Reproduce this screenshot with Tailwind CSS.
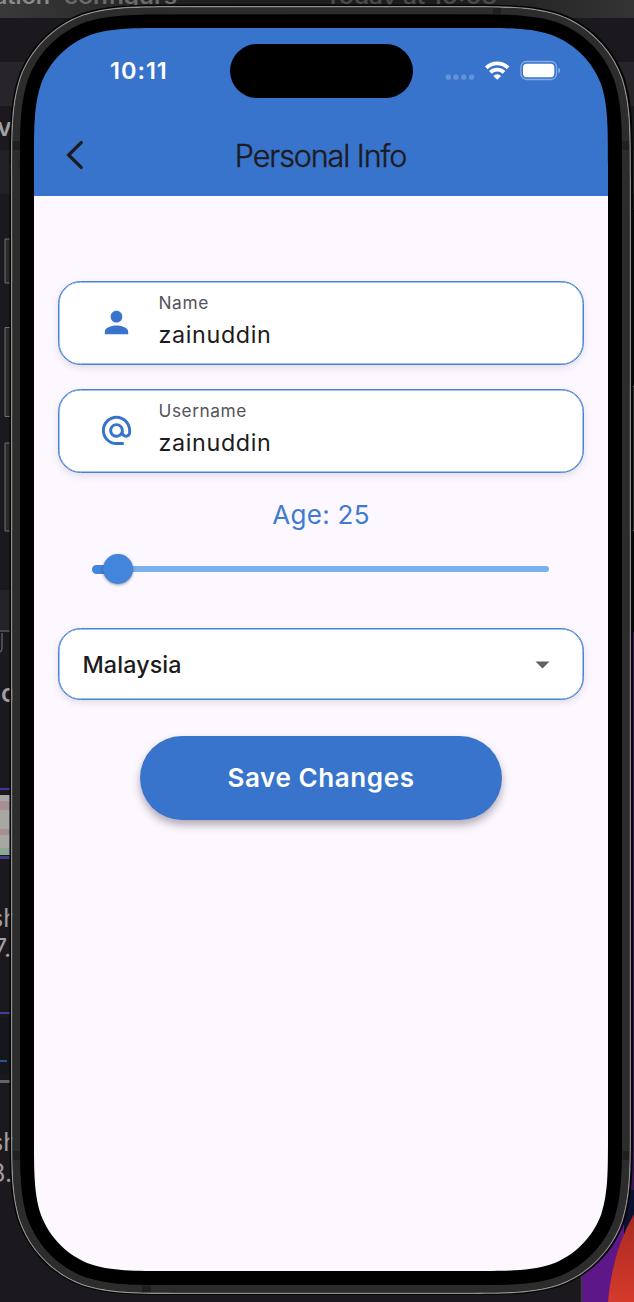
<!DOCTYPE html>
<html lang="en">
<head>
<meta charset="utf-8">
<title>Personal Info</title>
<script src="https://cdn.jsdelivr.net/npm/@tailwindcss/browser@4"></script>
</head>
<body class="relative h-[1302px] w-[634px] overflow-hidden bg-[#1b191e] font-['Inter','Liberation_Sans',sans-serif]">

<!-- desktop behind the device -->
<svg class="absolute inset-0" width="634" height="1302" viewBox="0 0 634 1302">
  <defs>
    <linearGradient id="top" x1="0" x2="1"><stop offset="0" stop-color="#3a3a3a"/><stop offset=".3" stop-color="#1f1f1f"/><stop offset=".7" stop-color="#1c1c1c"/><stop offset="1" stop-color="#343434"/></linearGradient>
    <linearGradient id="red" x1="0" y1="0" x2="0" y2="1"><stop offset="0" stop-color="#a82a20"/><stop offset="1" stop-color="#d53a2b"/></linearGradient>
  </defs>
  <rect width="634" height="18" fill="url(#top)"/>
  <rect y="62" width="634" height="44" fill="#272529"/>
  <rect y="150" width="634" height="44" fill="#232125"/>
  <rect y="590" width="12" height="40" fill="#252327"/>
  <rect y="630" width="12" height="2" fill="#49474b"/>
  <path d="M2 633v14q0 4-2 5" fill="none" stroke="#5b595d" stroke-width="1.5"/>
  <rect y="788" width="10" height="2" fill="#3a3a9a"/>
  <rect y="795" width="10" height="60" fill="#a9a6a6"/>
  <rect y="801" width="10" height="9" fill="#a79092"/>
  <rect y="829" width="10" height="6" fill="#a79092"/>
  <rect y="848" width="10" height="7" fill="#8ba597"/>
  <rect y="856" width="10" height="3" fill="#3c3c86"/>
  <rect y="1012" width="10" height="2" fill="#3f3f9d"/>
  <rect y="1017" width="10" height="57" fill="#15171c"/>
  <rect y="1060" width="7" height="2" fill="#2a5296"/>
  <rect y="1080" width="10" height="3" fill="#66656c"/>
  <path d="M582 1180h52v122h-52z" fill="#5d1788"/>
  <path d="M624 1190h10v60h-10z" fill="#0c1030"/>
  <path d="M608 1302q4-50 26-88v88z" fill="url(#red)"/>
  <path d="M631 632h3v558h-3z" fill="#3c1757"/>
  <path d="M581.500 1270v32" stroke="#3c3b3f" stroke-width="1.500"/>
  <rect x="629" y="387" width="5" height="143" fill="#2b2b2b"/>
  <rect x="629" y="210" width="5" height="176" fill="#050505"/>
  <rect x="629" y="531" width="5" height="101" fill="#050505"/>
  <path d="M630 386.500h4M630 530.500h4" stroke="#777"/>
  <g font-size="20" font-weight="600" fill="#8a8a8a">
    <text x="-6" y="4" textLength="56" lengthAdjust="spacingAndGlyphs">ation</text>
    <text x="64" y="4" textLength="113" lengthAdjust="spacingAndGlyphs" fill="#6a6a6a">configurs</text>
    <text x="325" y="4" textLength="172" lengthAdjust="spacingAndGlyphs" fill="#4a4a4a">Today at 10:08</text>
  </g>
  <g font-size="25" fill="#a09fa2">
    <text x="-3" y="136" font-weight="600">v</text>
    <text x="1" y="702" font-weight="600">o</text>
    <text x="-10" y="927">sh</text>
    <text x="-7" y="957">7.</text>
    <text x="-10" y="1151">sh</text>
    <text x="-10" y="1182">8.</text>
  </g>
</svg>

<!-- app screen -->
<main class="relative ml-[34px] mt-[28px] flex h-[1243px] w-[574px] flex-col overflow-hidden rounded-[70px] bg-[#fdf8ff]">
  <header class="flex h-[167.500px] flex-col bg-[#3874cc]">
    <div class="flex h-[86px] items-center">
      <div class="w-[195.500px] pl-[76px] text-[23.500px] font-semibold leading-none tracking-[1px] text-white">10:11</div>
      <div class="h-[54px] w-[183px] rounded-full bg-black"></div>
      <svg class="mb-[3px] ml-[31px]" width="118" height="24" viewBox="444 58 118 24">
        <g fill="#fff" fill-opacity=".22"><rect x="445.700" y="74.500" width="5.200" height="5.200" rx="1.800"/><rect x="453.400" y="74.500" width="5.200" height="5.200" rx="1.800"/><rect x="461.200" y="74.500" width="5.200" height="5.200" rx="1.800"/><rect x="469" y="74.500" width="5.200" height="5.200" rx="1.800"/></g>
        <g fill="none" stroke="#fff" stroke-width="3.700"><path d="M486.300 67.900a15.600 15.600 0 0 1 21.800 0"/><path d="M490.400 72.400a9.700 9.700 0 0 1 13.600 0"/></g>
        <path d="M497.200 79.700l-3.900-3.800a5.600 5.600 0 0 1 7.800 0z" fill="#fff"/>
        <rect x="520.900" y="61.500" width="35.600" height="18" rx="5.500" fill="none" stroke="#fff" stroke-opacity=".4" stroke-width="1.300"/>
        <rect x="523" y="63.700" width="31.300" height="13.600" rx="3.700" fill="#fff"/>
        <path d="M558.300 67.800q1.900.8 1.900 2.700t-1.900 2.700z" fill="#fff" fill-opacity=".45"/>
      </svg>
    </div>
    <div class="relative flex flex-1 items-center justify-center">
      <svg class="absolute left-[30px] top-[24px]" width="24" height="34" viewBox="64 138 24 34" fill="none" stroke="#1d1b20" stroke-width="3.300" stroke-linecap="round" stroke-linejoin="miter"><path d="M81.200 142.600L68.600 155l12.600 12.400"/></svg>
      <h1 class="pr-px pt-[2px] text-[30.500px] font-light leading-none tracking-[-1.100px] text-[#1d1b20] [-webkit-text-stroke:0.400px_#1d1b20]">Personal Info</h1>
    </div>
  </header>

  <form class="flex flex-col px-[24px] pt-[85.500px]">
    <label class="flex h-[84px] items-center rounded-[22.500px] border border-[#4684d6] bg-white shadow-[inset_0_0_0_0.500px_#4684d6,0_3px_7px_rgba(60,40,70,0.13)]">
      <svg class="-mt-px ml-[40px]" width="35" height="35" viewBox="0 0 24 24" fill="#3874cc"><path d="M12 12c2.210 0 4-1.790 4-4s-1.790-4-4-4-4 1.790-4 4 1.790 4 4 4zm0 2c-2.670 0-8 1.340-8 4v2h16v-2c0-2.660-5.330-4-8-4z"/></svg>
      <span class="-mt-[4px] ml-[24.500px] flex flex-col">
        <span class="text-[17.300px] leading-[22px] tracking-[0.600px] text-[#55525a]">Name</span>
        <span class="mt-[5px] text-[23.300px] leading-[32px] tracking-[0.650px] text-[#1d1b20]">zainuddin</span>
      </span>
    </label>
    <label class="mt-[24px] flex h-[84px] items-center rounded-[22.500px] border border-[#4684d6] bg-white shadow-[inset_0_0_0_0.500px_#4684d6,0_3px_7px_rgba(60,40,70,0.13)]">
      <svg class="-mt-px ml-[40px]" width="35" height="35" viewBox="0 0 24 24" fill="#3874cc"><path d="M12 1.950c-5.520 0-10 4.480-10 10s4.480 10 10 10h5v-2h-5c-4.340 0-8-3.660-8-8s3.660-8 8-8 8 3.660 8 8v1.430c0 .79-.71 1.570-1.500 1.570s-1.500-.78-1.500-1.570v-1.430c0-2.760-2.240-5-5-5s-5 2.240-5 5 2.240 5 5 5c1.380 0 2.640-.56 3.540-1.470.65.890 1.770 1.470 2.960 1.470 1.970 0 3.500-1.600 3.500-3.570v-1.430c0-5.520-4.480-10-10-10zm0 13c-1.660 0-3-1.340-3-3s1.340-3 3-3 3 1.340 3 3-1.340 3-3 3z"/></svg>
      <span class="-mt-[4px] ml-[24.500px] flex flex-col">
        <span class="text-[17.300px] leading-[22px] tracking-[0.550px] text-[#55525a]">Username</span>
        <span class="mt-[5px] text-[23.300px] leading-[32px] tracking-[0.650px] text-[#1d1b20]">zainuddin</span>
      </span>
    </label>
    <p class="mt-[26px] text-center text-[26px] leading-[32px] tracking-[0.300px] text-[#3f7bd0]">Age: 25</p>
    <div class="mt-[23px] flex h-[30px] items-center pl-[34px]">
      <div class="h-[9px] w-[15px] rounded-l-full bg-[#4285dc]"></div>
      <div class="z-10 -ml-[4px] size-[30px] rounded-full bg-[#4285dc] shadow-[0_1px_3px_rgba(0,0,0,0.4)]"></div>
      <div class="-ml-[2px] h-[6px] w-[418px] rounded-r-full bg-[#78b1ee]"></div>
    </div>
    <div class="mt-[44px] flex h-[72px] items-center justify-between rounded-[22.500px] border border-[#4684d6] bg-white pl-[23.500px] pr-[33px] shadow-[inset_0_0_0_0.500px_#4684d6,0_3px_7px_rgba(60,40,70,0.13)]">
      <span class="pt-[2px] text-[23.300px] font-medium tracking-[0.100px] text-[#1d1b20]">Malaysia</span>
      <svg class="mt-px" width="15" height="8" viewBox="0 0 14 8" fill="#616161"><path d="M0 .5h14L7 7.500z"/></svg>
    </div>
    <button type="button" class="mt-[36px] h-[84px] w-[362px] self-center rounded-full bg-[#3874cc] pb-[2px] text-[26px] font-semibold tracking-[0.600px] text-white shadow-[0_5px_9px_rgba(40,25,50,0.35)]">Save Changes</button>
  </form>
</main>

<!-- device bezel, drawn over the screen edges -->
<svg class="pointer-events-none absolute inset-0" width="634" height="1302" viewBox="0 0 634 1302">
  <g fill="#2b2b2b" stroke="#707070">
    <path d="M12 239H5v44h7z"/><path d="M12 327.500H5v89h7z"/><path d="M12 443H5v88h7z"/>
  </g>
  <path data-ring="9.500,4.500,623.500,1290.500,115" data-hole="12,7,618,1285,112" fill="#050505" fill-rule="evenodd"/>
  <path data-ring="11,6,620,1288,114" data-hole="12.500,7.500,617,1285,112" fill="#929292" fill-rule="evenodd"/>
  <path data-ring="12.400,7.400,617.200,1285.200,112" data-hole="20,14,602,1271,104" fill="#2c2c2c" fill-rule="evenodd"/>
  <g fill="#1f1f1f"><path d="M493 8h8v6.500h-8zM142 1285.500h9v6.500h-9zM13 141h7v9h-7zM13 1151h7v9h-7zM622.500 141h6.500v9h-6.500zM622.500 1151h6.500v9h-6.500z"/></g>
  <path data-ring="20,14.500,602,1270.500,104" data-hole="34,28,574,1243,90" fill="#000" fill-rule="evenodd"/>
</svg>
<script>
// Rounded rectangle with continuous-curvature corners.
function smooth(s) {
  const [x, y, w, h, r] = s.split(',').map(Number);
  const C = [[1.5287,0],[1.0885,0],[.8684,0],[.6315,.0749],[.3728,.1691],[.1691,.3728],[.0749,.6315],[0,.8684],[0,1.0885],[0,1.5287]];
  const R = C.slice().reverse();
  const tl = R.map(([a,b]) => [x+a*r, y+b*r]);
  const tr = C.map(([a,b]) => [x+w-a*r, y+b*r]);
  const br = R.map(([a,b]) => [x+w-a*r, y+h-b*r]);
  const bl = C.map(([a,b]) => [x+a*r, y+h-b*r]);
  return [tl,tr,br,bl].map((p,i) => (i?'L':'M')+p[0]+'C'+p.slice(1).join(' ')).join('')+'Z';
}
document.querySelectorAll('[data-ring]').forEach(e => e.setAttribute('d', smooth(e.dataset.ring)+smooth(e.dataset.hole)));
</script>
</body>
</html>
